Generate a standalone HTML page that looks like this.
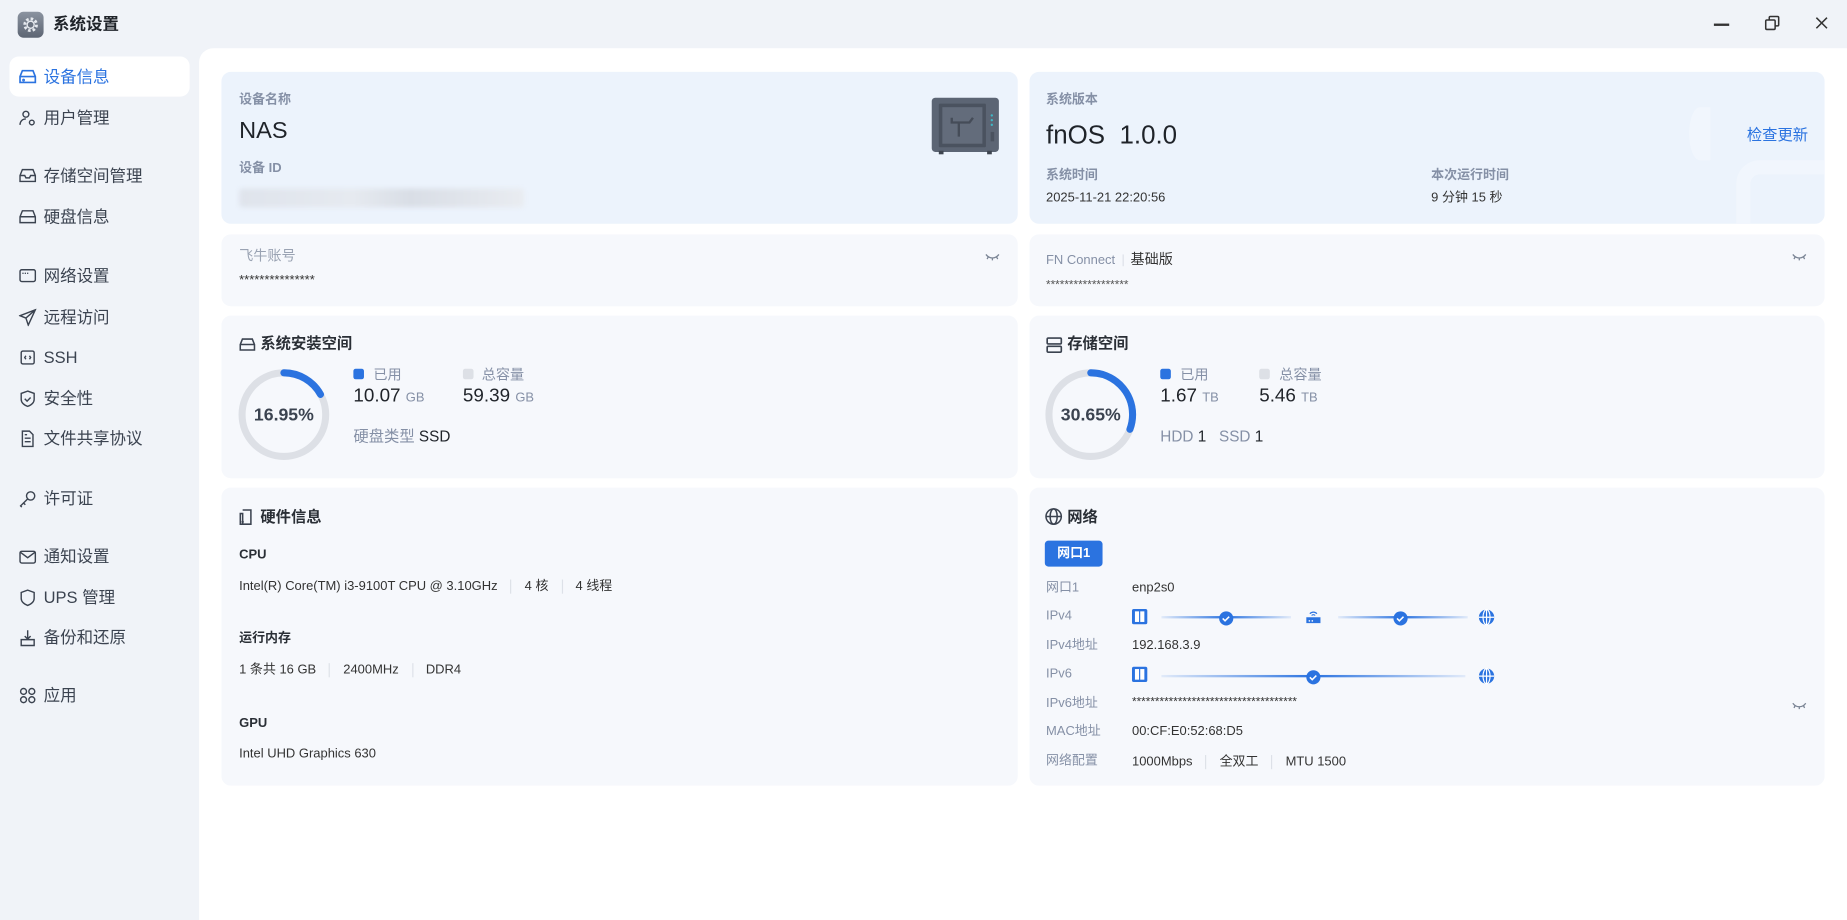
<!DOCTYPE html>
<html><head><meta charset="utf-8">
<style>
*{margin:0;padding:0;box-sizing:border-box}
html,body{width:1847px;height:919px;overflow:hidden;background:#f0f3f8}
body{font-family:"Liberation Sans","Noto Sans CJK SC",sans-serif;color:#1f2329}
#s{position:absolute;left:0;top:0;width:1568px;height:781px;transform:scale(1.17793);transform-origin:0 0}
.a{position:absolute;white-space:nowrap;line-height:1}
.g{color:#8590a6}
.card{position:absolute;border-radius:8px;background:#f6f8fc}
.nav{font-size:14px;color:#3b4350}
.ic{position:absolute;left:16px}
.sep{display:inline-block;width:1px;height:12px;background:#dde1e8;vertical-align:middle;margin:0 11px}
</style></head><body><div id="s">
<div style="position:absolute;left:15px;top:10px;width:22px;height:22px;border-radius:5px;background:linear-gradient(#8b93a0,#5d6573)"></div>
<svg class="a" style="left:18px;top:13px" width="16" height="16" viewBox="0 0 16 16"><circle cx="8" cy="8" r="5" fill="none" stroke="#e6e9ee" stroke-width="2.4" stroke-dasharray="2.2 1.7"/><circle cx="8" cy="8" r="3" fill="#6b7380" stroke="#e6e9ee" stroke-width="1.2"/></svg>
<div class="a" style="left:45px;top:13px;font-size:14px;font-weight:bold;color:#1f2329">系统设置</div>
<div class="a" style="left:1455px;top:20px;width:13px;height:1.5px;background:#333"></div>
<svg class="a" style="left:1498px;top:13px" width="13" height="13" viewBox="0 0 13 13" fill="none" stroke="#333" stroke-width="1.3"><rect x="1" y="4" width="8" height="8" rx="1"/><path d="M4 4V2a1 1 0 0 1 1-1h6a1 1 0 0 1 1 1v6a1 1 0 0 1-1 1H9"/></svg>
<svg class="a" style="left:1541px;top:14px" width="11" height="11" viewBox="0 0 11 11" stroke="#333" stroke-width="1.3"><path d="M1 1L10 10M10 1L1 10"/></svg>
<div style="position:absolute;left:8px;top:48px;width:153px;height:34px;border-radius:8px;background:#fff"></div>
<svg class="ic" style="top:58px" width="15" height="14" viewBox="0 0 15 14" fill="none" stroke="#2b73e0" stroke-width="1.4"><path d="M3 2h9l2 5v5H1V7z M1 7h13"/><circle cx="4" cy="10" r=".5"/></svg>
<div class="a nav" style="left:37px;top:58px;color:#2b73e0">设备信息</div>
<svg class="ic" style="top:93px" width="15" height="15" viewBox="0 0 15 15" fill="none" stroke="#3b4350" stroke-width="1.2"><circle cx="6" cy="4" r="2.5"/><path d="M1 13c0-3 2-5 5-5"/><circle cx="11" cy="11" r="2"/></svg>
<div class="a nav" style="left:37px;top:93px">用户管理</div>
<svg class="ic" style="top:142px" width="15" height="14" viewBox="0 0 15 14" fill="none" stroke="#3b4350" stroke-width="1.2"><path d="M3 2h9l2 5v5H1V7z M1 7h4l1 2h3l1-2h4"/></svg>
<div class="a nav" style="left:37px;top:142px">存储空间管理</div>
<svg class="ic" style="top:177px" width="15" height="14" viewBox="0 0 15 14" fill="none" stroke="#3b4350" stroke-width="1.2"><path d="M3 2h9l2 5v5H1V7z M1 7h13"/></svg>
<div class="a nav" style="left:37px;top:177px">硬盘信息</div>
<svg class="ic" style="top:227px" width="15" height="14" viewBox="0 0 15 14" fill="none" stroke="#3b4350" stroke-width="1.2"><rect x="1" y="2" width="13" height="10" rx="1.5"/><path d="M3 5h1M5 5h1M7 5h1"/></svg>
<div class="a nav" style="left:37px;top:227px">网络设置</div>
<svg class="ic" style="top:262px" width="15" height="15" viewBox="0 0 15 15" fill="none" stroke="#3b4350" stroke-width="1.2"><path d="M14 1L1 6l5 2 2 6z M6 8l8-7"/></svg>
<div class="a nav" style="left:37px;top:262px">远程访问</div>
<svg class="ic" style="top:296px" width="15" height="15" viewBox="0 0 15 15" fill="none" stroke="#3b4350" stroke-width="1.2"><rect x="2" y="2" width="11" height="11" rx="1.5"/><path d="M6 6L5 7.5 6 9M9 6l1 1.5L9 9"/></svg>
<div class="a nav" style="left:37px;top:296px">SSH</div>
<svg class="ic" style="top:331px" width="15" height="15" viewBox="0 0 15 15" fill="none" stroke="#3b4350" stroke-width="1.2"><path d="M7.5 1L13 3v5c0 3-3 5-5.5 6C5 13 2 11 2 8V3z M5 7.5l2 2 3-3"/></svg>
<div class="a nav" style="left:37px;top:331px">安全性</div>
<svg class="ic" style="top:365px" width="15" height="15" viewBox="0 0 15 15" fill="none" stroke="#3b4350" stroke-width="1.2"><path d="M3 1h6l3 3v10H3z M5 7h5M5 10h5M5 4h2"/></svg>
<div class="a nav" style="left:37px;top:365px">文件共享协议</div>
<svg class="ic" style="top:416px" width="15" height="15" viewBox="0 0 15 15" fill="none" stroke="#3b4350" stroke-width="1.2"><circle cx="10" cy="5" r="3.5"/><path d="M7.5 7.5L1.5 13.5l1 1M4 11l1.5 1.5"/></svg>
<div class="a nav" style="left:37px;top:416px">许可证</div>
<svg class="ic" style="top:465px" width="15" height="15" viewBox="0 0 15 15" fill="none" stroke="#3b4350" stroke-width="1.2"><rect x="1" y="3" width="13" height="10" rx="1.5"/><path d="M1.5 4l6 4.5 6-4.5"/></svg>
<div class="a nav" style="left:37px;top:465px">通知设置</div>
<svg class="ic" style="top:500px" width="15" height="15" viewBox="0 0 15 15" fill="none" stroke="#3b4350" stroke-width="1.2"><path d="M7.5 1L13 3v5c0 3-3 5-5.5 6C5 13 2 11 2 8V3z"/></svg>
<div class="a nav" style="left:37px;top:500px">UPS 管理</div>
<svg class="ic" style="top:534px" width="15" height="15" viewBox="0 0 15 15" fill="none" stroke="#3b4350" stroke-width="1.2"><path d="M7.5 1v7M5 6l2.5 2.5L10 6 M2 9h11v5H2z"/></svg>
<div class="a nav" style="left:37px;top:534px">备份和还原</div>
<svg class="ic" style="top:583px" width="15" height="15" viewBox="0 0 15 15" fill="none" stroke="#3b4350" stroke-width="1.2"><circle cx="4" cy="4" r="2.5"/><circle cx="11" cy="4" r="2.5"/><circle cx="4" cy="11" r="2.5"/><circle cx="11" cy="11" r="2.5"/></svg>
<div class="a nav" style="left:37px;top:583px">应用</div>
<div style="position:absolute;left:169px;top:41px;width:1399px;height:740px;background:#fff;border-top-left-radius:12px"></div>
<div class="card" style="left:188px;top:61px;width:676px;height:129px;background:#ecf3fc"></div>
<div class="a g" style="left:203px;top:80px;font-size:11px;font-weight:bold">设备名称</div>
<div class="a" style="left:203px;top:101px;font-size:20px">NAS</div>
<div class="a g" style="left:203px;top:138px;font-size:11px;font-weight:bold">设备 ID</div>
<div style="position:absolute;left:203px;top:160px;width:242px;height:16px;background:linear-gradient(90deg,#dfe4ec,#e6eaf0 40%,#d9dee6 60%,#e9ecf1);filter:blur(2px);border-radius:3px"></div>
<svg class="a" style="left:790px;top:82px" width="60" height="50" viewBox="0 0 60 50"><rect x="1" y="1" width="57" height="46" rx="3" fill="#5c6574"/><rect x="7" y="6" width="40" height="37" rx="1" fill="#4a525f"/><rect x="10" y="9" width="34" height="31" fill="#636c7b"/><path d="M18 18v4h15l3-4M24 22v12" stroke="#454c58" stroke-width="2" fill="none"/><circle cx="52" cy="16" r="1" fill="#3fb8c6"/><circle cx="52" cy="20" r="1" fill="#3fb8c6"/><circle cx="52" cy="24" r="1" fill="#3fb8c6"/><rect x="51" y="30" width="3" height="8" fill="#4a525f"/><rect x="7" y="46" width="4" height="3" fill="#3e4550"/><rect x="48" y="46" width="4" height="3" fill="#3e4550"/></svg>
<div class="card" style="left:874px;top:61px;width:675px;height:129px;background:#ecf3fc;overflow:hidden"><div style="position:absolute;left:600px;top:75px;width:110px;height:110px;border:12px solid #f1f6fd;border-radius:20px"></div><div style="position:absolute;left:560px;top:30px;width:18px;height:45px;border-radius:50% 0 0 50%;background:#f1f6fd"></div></div>
<div class="a g" style="left:888px;top:80px;font-size:11px;font-weight:bold">系统版本</div>
<div class="a" style="left:888px;top:104px;font-size:22px">fnOS&nbsp; 1.0.0</div>
<div class="a" style="left:1483px;top:108px;font-size:13px;color:#2b73e0">检查更新</div>
<div class="a g" style="left:888px;top:144px;font-size:11px;font-weight:bold">系统时间</div>
<div class="a" style="left:888px;top:163px;font-size:11px;color:#333">2025-11-21 22:20:56</div>
<div class="a g" style="left:1215px;top:144px;font-size:11px;font-weight:bold">本次运行时间</div>
<div class="a" style="left:1215px;top:163px;font-size:11px;color:#333">9 分钟 15 秒</div>
<div class="card" style="left:188px;top:199px;width:676px;height:61px"></div>
<div class="a g" style="left:203px;top:211px;font-size:12px;color:#9aa3b3">飞牛账号</div>
<div class="a" style="left:203px;top:233px;font-size:11px;color:#333">***************</div>
<svg class="a" style="left:836px;top:214px" width="13" height="8" viewBox="0 0 13 8" fill="none" stroke="#7a8494" stroke-width="1.1"><path d="M1 2c3 4 8 4 11 0M3 4L2 6M6.5 5v2M10 4l1 2"/></svg>
<div class="card" style="left:874px;top:199px;width:675px;height:61px"></div>
<div class="a" style="left:888px;top:214px;font-size:11px;color:#8590a6">FN Connect<span class="sep" style="height:10px;margin:0 6px"></span><span style="color:#333;font-size:12px">基础版</span></div>
<div class="a" style="left:888px;top:238px;font-size:10px;color:#555">******************</div>
<svg class="a" style="left:1521px;top:214px" width="13" height="8" viewBox="0 0 13 8" fill="none" stroke="#7a8494" stroke-width="1.1"><path d="M1 2c3 4 8 4 11 0M3 4L2 6M6.5 5v2M10 4l1 2"/></svg>
<div class="card" style="left:188px;top:268px;width:676px;height:138px"></div>
<svg class="a" style="left:203px;top:286px" width="14" height="13" viewBox="0 0 15 14" fill="none" stroke="#3b4350" stroke-width="1.4"><path d="M3 2h9l2 5v5H1V7z M1 7h13"/></svg>
<div class="a" style="left:221px;top:285px;font-size:13px;font-weight:bold;color:#2a2f36">系统安装空间</div>
<svg class="a" style="left:202px;top:313px" width="78" height="78" viewBox="0 0 78 78"><circle cx="39" cy="39" r="35.5" fill="none" stroke="#dde0e6" stroke-width="6"/><circle cx="39" cy="39" r="35.5" fill="none" stroke="#2b73e0" stroke-width="6" stroke-linecap="round" stroke-dasharray="37.8 300" transform="rotate(-90 39 39)"/></svg>
<div class="a" style="left:202px;top:345px;width:78px;text-align:center;font-size:15px;font-weight:bold;color:#3b4350">16.95%</div>
<div style="position:absolute;left:300px;top:313px;width:9px;height:9px;border-radius:2px;background:#2b73e0"></div>
<div class="a g" style="left:317px;top:312px;font-size:12px">已用</div>
<div style="position:absolute;left:393px;top:313px;width:9px;height:9px;border-radius:2px;background:#dde0e6"></div>
<div class="a g" style="left:409px;top:312px;font-size:12px">总容量</div>
<div class="a" style="left:300px;top:329px;font-size:16px">10.07 <span class="g" style="font-size:11px">GB</span></div>
<div class="a" style="left:393px;top:329px;font-size:16px">59.39 <span class="g" style="font-size:11px">GB</span></div>
<div class="a" style="left:300px;top:364px;font-size:13px"><span class="g">硬盘类型</span> SSD</div>
<div class="card" style="left:874px;top:268px;width:675px;height:138px"></div>
<svg class="a" style="left:888px;top:286px" width="14" height="14" viewBox="0 0 14 14" fill="none" stroke="#3b4350" stroke-width="1.4"><rect x="1" y="1" width="12" height="5" rx="1"/><rect x="1" y="8" width="12" height="5" rx="1"/></svg>
<div class="a" style="left:906px;top:285px;font-size:13px;font-weight:bold;color:#2a2f36">存储空间</div>
<svg class="a" style="left:887px;top:313px" width="78" height="78" viewBox="0 0 78 78"><circle cx="39" cy="39" r="35.5" fill="none" stroke="#dde0e6" stroke-width="6"/><circle cx="39" cy="39" r="35.5" fill="none" stroke="#2b73e0" stroke-width="6" stroke-linecap="round" stroke-dasharray="68.4 300" transform="rotate(-90 39 39)"/></svg>
<div class="a" style="left:887px;top:345px;width:78px;text-align:center;font-size:15px;font-weight:bold;color:#3b4350">30.65%</div>
<div style="position:absolute;left:985px;top:313px;width:9px;height:9px;border-radius:2px;background:#2b73e0"></div>
<div class="a g" style="left:1002px;top:312px;font-size:12px">已用</div>
<div style="position:absolute;left:1069px;top:313px;width:9px;height:9px;border-radius:2px;background:#dde0e6"></div>
<div class="a g" style="left:1086px;top:312px;font-size:12px">总容量</div>
<div class="a" style="left:985px;top:329px;font-size:16px">1.67 <span class="g" style="font-size:11px">TB</span></div>
<div class="a" style="left:1069px;top:329px;font-size:16px">5.46 <span class="g" style="font-size:11px">TB</span></div>
<div class="a" style="left:985px;top:364px;font-size:13px"><span class="g">HDD</span> 1&nbsp;&nbsp; <span class="g">SSD</span> 1</div>
<div class="card" style="left:188px;top:414px;width:676px;height:253px"></div>
<svg class="a" style="left:203px;top:432px" width="12" height="14" viewBox="0 0 12 14" fill="none" stroke="#3b4350" stroke-width="1.3"><path d="M3 1h7v12H3M1 4h2v9H1z"/><circle cx="3" cy="11" r=".4"/></svg>
<div class="a" style="left:221px;top:432px;font-size:13px;font-weight:bold;color:#2a2f36">硬件信息</div>
<div class="a" style="left:203px;top:466px;font-size:11px;font-weight:bold;color:#2a2f36">CPU</div>
<div class="a" style="left:203px;top:492px;font-size:11px;color:#333">Intel(R) Core(TM) i3-9100T CPU @ 3.10GHz<span class="sep"></span>4 核<span class="sep"></span>4 线程</div>
<div class="a" style="left:203px;top:537px;font-size:11px;font-weight:bold;color:#2a2f36">运行内存</div>
<div class="a" style="left:203px;top:563px;font-size:11px;color:#333">1 条共 16 GB<span class="sep"></span>2400MHz<span class="sep"></span>DDR4</div>
<div class="a" style="left:203px;top:609px;font-size:11px;font-weight:bold;color:#2a2f36">GPU</div>
<div class="a" style="left:203px;top:635px;font-size:11px;color:#333">Intel UHD Graphics 630</div>
<div class="card" style="left:874px;top:414px;width:675px;height:253px"></div>
<svg class="a" style="left:887px;top:431px" width="15" height="15" viewBox="0 0 15 15" fill="none" stroke="#3b4350" stroke-width="1.3"><circle cx="7.5" cy="7.5" r="6.5"/><ellipse cx="7.5" cy="7.5" rx="3" ry="6.5"/><path d="M1 7.5h13"/></svg>
<div class="a" style="left:906px;top:432px;font-size:13px;font-weight:bold;color:#2a2f36">网络</div>
<div style="position:absolute;left:887px;top:459px;width:49px;height:22px;border-radius:3px;background:#2b73e0;color:#fff;font-size:11px;font-weight:bold;text-align:center;line-height:22px">网口1</div>
<div class="a g" style="left:888px;top:494px;font-size:11px">网口1</div><div class="a" style="left:961px;top:494px;font-size:11px;color:#333">enp2s0</div>
<div class="a g" style="left:888px;top:518px;font-size:11px">IPv4</div>
<div class="a g" style="left:888px;top:543px;font-size:11px">IPv4地址</div><div class="a" style="left:961px;top:543px;font-size:11px;color:#333">192.168.3.9</div>
<div class="a g" style="left:888px;top:567px;font-size:11px">IPv6</div>
<div class="a g" style="left:888px;top:592px;font-size:11px">IPv6地址</div><div class="a" style="left:961px;top:592px;font-size:10px;color:#333">************************************</div>
<svg class="a" style="left:1521px;top:595px" width="13" height="8" viewBox="0 0 13 8" fill="none" stroke="#7a8494" stroke-width="1.1"><path d="M1 2c3 4 8 4 11 0M3 4L2 6M6.5 5v2M10 4l1 2"/></svg>
<div class="a g" style="left:888px;top:616px;font-size:11px">MAC地址</div><div class="a" style="left:961px;top:616px;font-size:11px;color:#333">00:CF:E0:52:68:D5</div>
<div class="a g" style="left:888px;top:641px;font-size:11px">网络配置</div><div class="a" style="left:961px;top:641px;font-size:11px;color:#333">1000Mbps<span class="sep"></span>全双工<span class="sep"></span>MTU 1500</div>
<svg class="a" style="left:955px;top:510px" width="320" height="75" viewBox="955 510 320 75">
<defs><linearGradient id="l1" x1="0" x2="1"><stop offset="0" stop-color="#2b73e0" stop-opacity=".1"/><stop offset=".5" stop-color="#2b73e0"/><stop offset="1" stop-color="#2b73e0" stop-opacity=".1"/></linearGradient></defs>
<g fill="#2b73e0">
<rect x="961" y="517" width="13" height="13" rx="1.5"/><rect x="963.5" y="519" width="3.5" height="9" fill="#fff"/><rect x="968" y="519" width="3.5" height="9" fill="#fff"/>
<rect x="961" y="566" width="13" height="13" rx="1.5"/><rect x="963.5" y="568" width="3.5" height="9" fill="#fff"/><rect x="968" y="568" width="3.5" height="9" fill="#fff"/>
<rect x="986" y="523" width="110" height="2" fill="url(#l1)"/><rect x="1136" y="523" width="110" height="2" fill="url(#l1)"/>
<rect x="986" y="573" width="258" height="2" fill="url(#l1)"/>
<circle cx="1041" cy="525" r="6"/><circle cx="1189" cy="525" r="6"/><circle cx="1115" cy="575" r="6"/>
<path d="M1109 524h12v5h-12z"/><path d="M1112 521a4 4 0 0 1 6 0M1113.5 522.5a2 2 0 0 1 3 0" fill="none" stroke="#2b73e0" stroke-width="1"/>
<circle cx="1262" cy="524" r="6.5"/><circle cx="1262" cy="574" r="6.5"/>
</g>
<g fill="none" stroke="#fff" stroke-width="1.3"><path d="M1038 525l2 2 3.5-3.5M1186 525l2 2 3.5-3.5M1112 575l2 2 3.5-3.5"/>
<path d="M1255.5 524h13M1262 517.5v13M1255.5 574h13M1262 567.5v13" stroke-width="1"/><ellipse cx="1262" cy="524" rx="3" ry="6.5" stroke-width="1"/><ellipse cx="1262" cy="574" rx="3" ry="6.5" stroke-width="1"/></g>
<g fill="#fff"><rect x="1111" y="526.5" width="1.2" height="1.2"/><rect x="1113.5" y="526.5" width="1.2" height="1.2"/></g>
</svg>
</div></body></html>
